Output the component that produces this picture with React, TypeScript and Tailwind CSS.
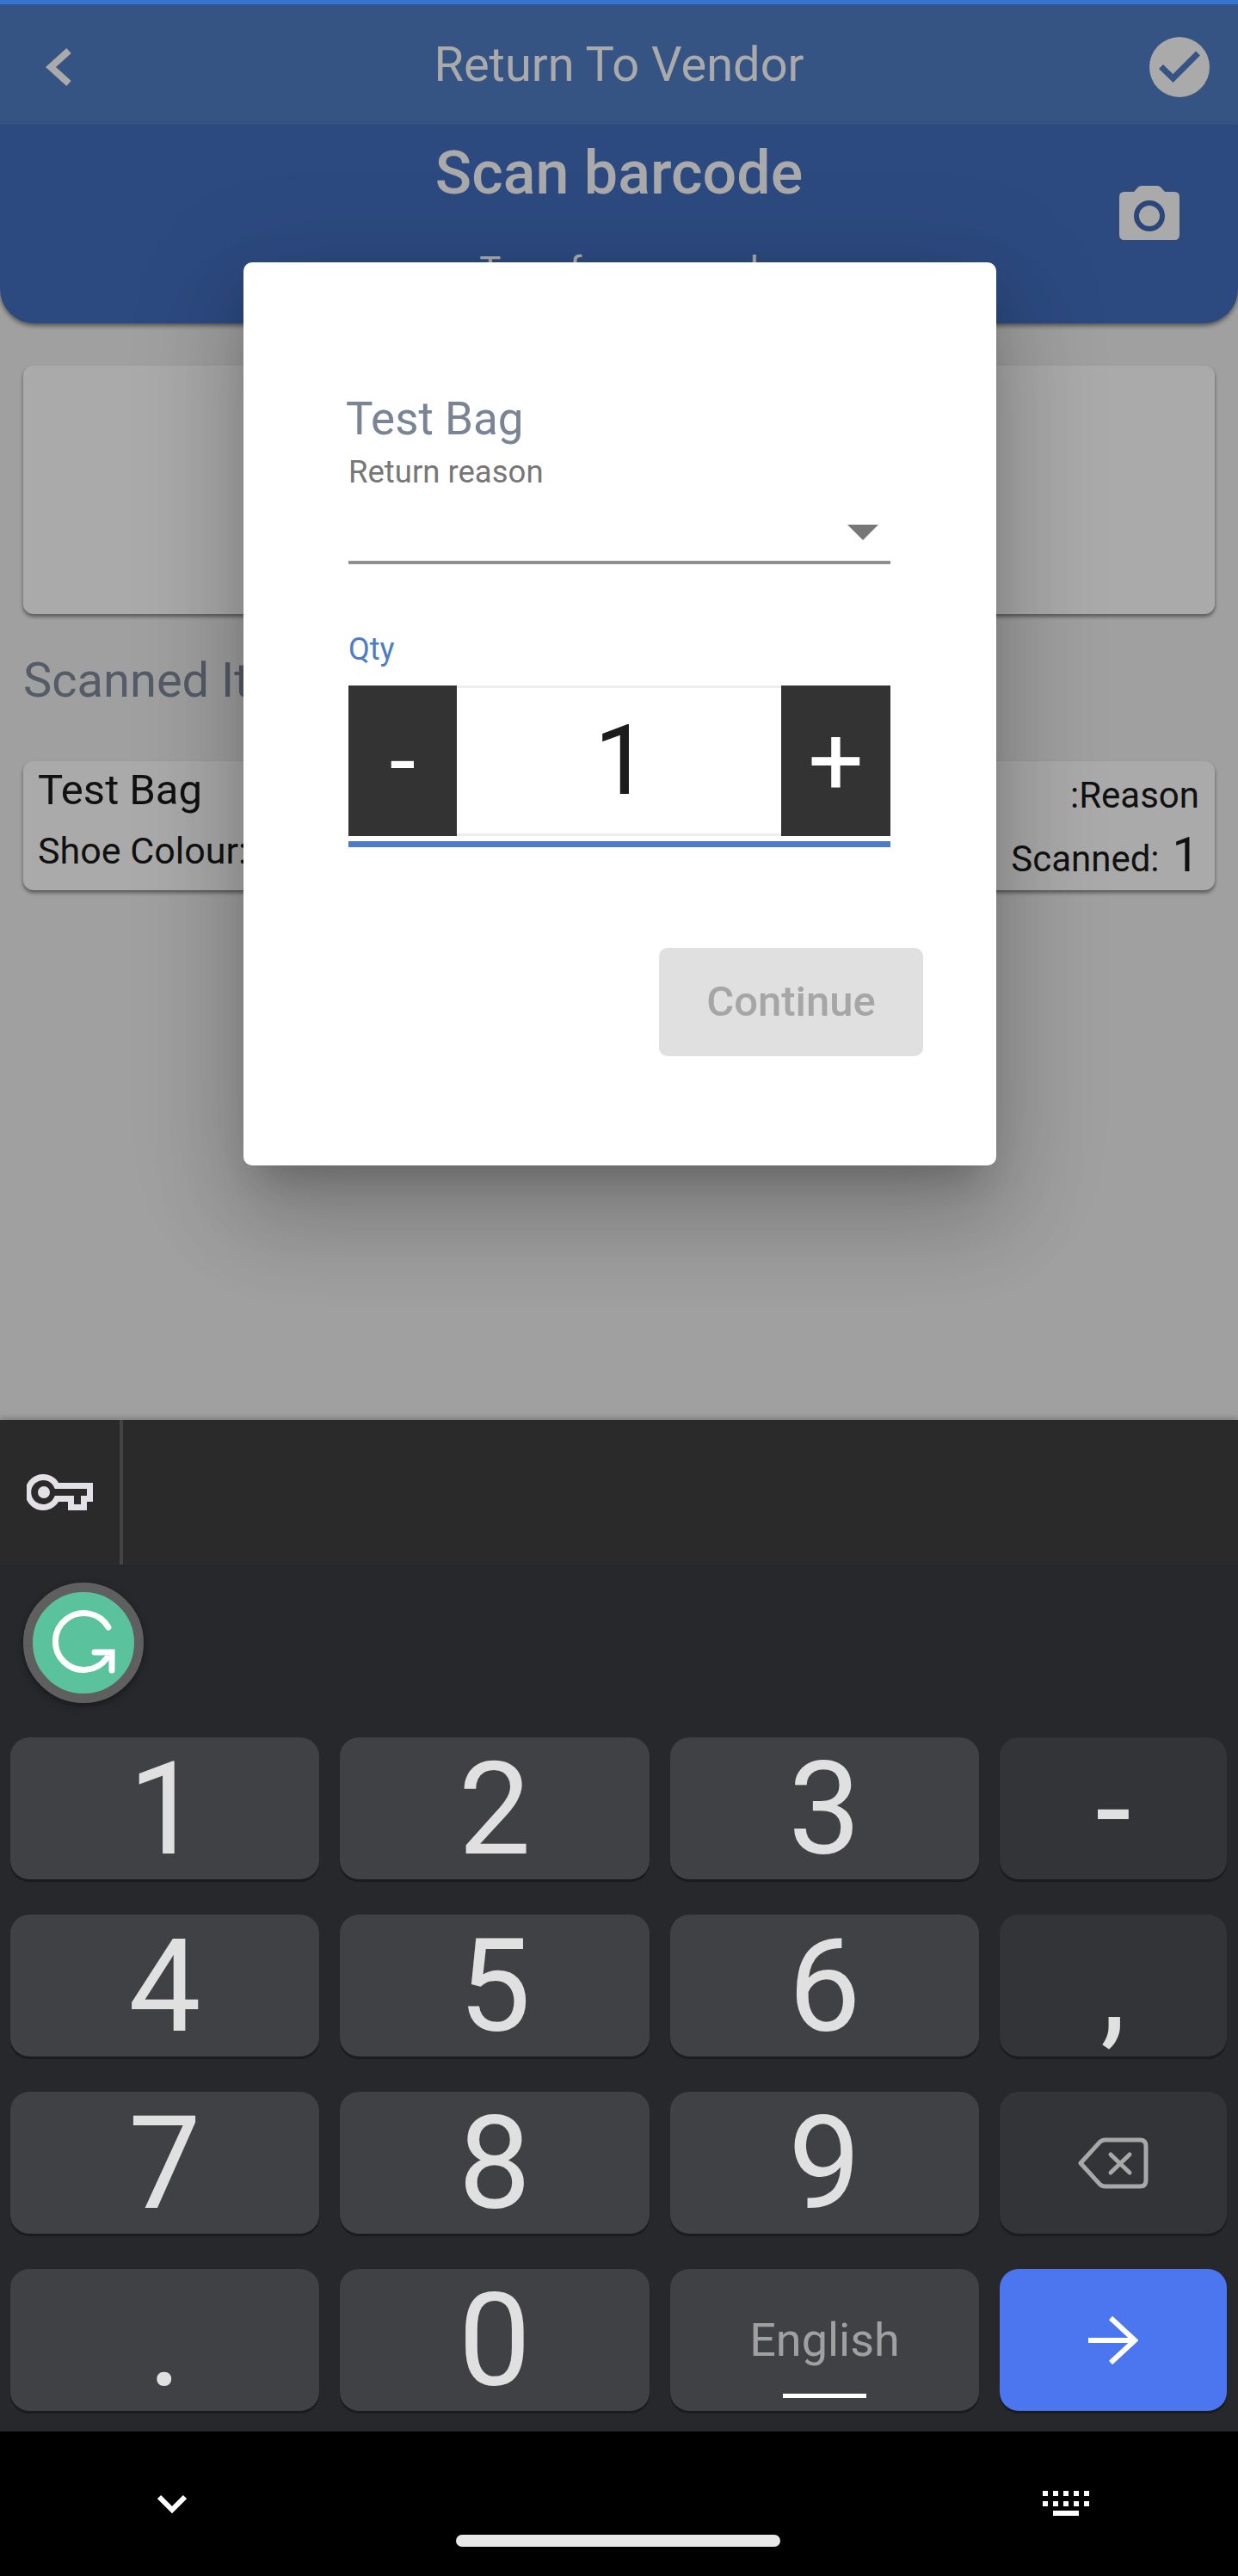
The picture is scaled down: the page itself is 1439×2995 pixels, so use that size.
import React from "react";

function Key({ label, fn }: { label: string; fn?: boolean }) {
  return (
    <div
      className={`h-[165px] pt-[2px] rounded-[22px] flex items-center justify-center text-[150px] leading-none text-[#e0e0e0] shadow-[0_3px_1px_#1b1b1e] ${
        fn ? "bg-[#333438]" : "bg-[#404145]"
      }`}
    >
      {label}
    </div>
  );
}

function CheckCircle() {
  return (
    <svg width="70" height="70" viewBox="0 0 70 70">
      <circle cx="35" cy="35" r="35" fill="#aaaaaa" />
      <path d="M13.5 34.5 L27.5 48 L56.5 19" fill="none" stroke="#365483" strokeWidth="7" />
    </svg>
  );
}

function Camera() {
  return (
    <svg width="70" height="63" viewBox="0 0 70 63">
      <path
        d="M6 7 H17 L22 1.5 Q23.5 0 26 0 H44 Q46.5 0 48 1.5 L53 7 H64 Q70 7 70 13 V57 Q70 63 64 63 H6 Q0 63 0 57 V13 Q0 7 6 7 Z"
        fill="#aaaaaa"
      />
      <circle cx="35" cy="35" r="15" fill="none" stroke="#2c4679" strokeWidth="6" />
    </svg>
  );
}

function KeyIcon() {
  return (
    <svg width="77" height="42" viewBox="0 0 77 42">
      <path
        d="M35 13.5 H73.5 V28.5 H66.5 V38.5 H51.5 V28.5 H35 A17.5 17.5 0 1 1 35 13.5 Z"
        fill="none"
        stroke="#e3e1e6"
        strokeWidth="7"
      />
      <circle cx="20" cy="21" r="7" fill="#e3e1e6" />
    </svg>
  );
}

function GrammarlyIcon() {
  return (
    <svg width="140" height="140" viewBox="0 0 140 140">
      <circle cx="70" cy="70" r="64.5" fill="#5bc29e" stroke="#5f5f5f" strokeWidth="11" />
      <path
        d="M99 52 A33 33 0 1 0 97 88"
        fill="none"
        stroke="#ffffff"
        strokeWidth="7"
        strokeLinecap="round"
      />
      <path
        d="M83 81 H103 V102"
        fill="none"
        stroke="#ffffff"
        strokeWidth="7"
        strokeLinecap="round"
      />
    </svg>
  );
}

function DeleteIcon() {
  return (
    <svg width="82" height="60" viewBox="0 0 82 60">
      <path
        d="M3 30 L24 7 Q27 3 32 3 H72 Q79 3 79 10 V50 Q79 57 72 57 H32 Q27 57 24 53 Z"
        fill="none"
        stroke="#a8a8a8"
        strokeWidth="5"
        strokeLinejoin="round"
      />
      <path
        d="M38 20 L60 41 M60 20 L38 41"
        fill="none"
        stroke="#a8a8a8"
        strokeWidth="5"
        strokeLinecap="round"
      />
    </svg>
  );
}

function ArrowIcon() {
  return (
    <svg width="58" height="56" viewBox="0 0 58 56">
      <path d="M0 28 H54 M26 2 L54 28 L26 54" fill="none" stroke="#ffffff" strokeWidth="6" />
    </svg>
  );
}

function KeyboardIcon() {
  const xs = [0, 12, 24, 36, 48];
  return (
    <svg width="54" height="30" viewBox="0 0 54 30">
      {xs.map((x) => (
        <rect key={`a${x}`} x={x} y="0" width="6" height="6" fill="#ffffff" />
      ))}
      {xs.map((x) => (
        <rect key={`b${x}`} x={x} y="12" width="6" height="6" fill="#ffffff" />
      ))}
      <rect x="12" y="23" width="30" height="6" fill="#ffffff" />
    </svg>
  );
}

export default function App() {
  return (
    <div className="w-[1439px] h-[2995px] flex flex-col overflow-hidden font-['Roboto',sans-serif]">
      <div className="relative h-[1651px] shrink-0 bg-[#a0a0a0] overflow-hidden">
        <div className="h-[5px] bg-[#3874ce]" />
        <div className="h-[140px] bg-[#365483] grid grid-cols-[1fr_auto_1fr] items-center pl-[53px] pr-[33px]">
          <svg width="30" height="44" viewBox="0 0 30 44" className="mt-[6px]">
            <path d="M27 3 L6 22 L27 41" fill="none" stroke="#aaaaaa" strokeWidth="8" />
          </svg>
          <div className="text-[56px] leading-[64px] text-[#aaaaaa] -translate-x-[10px]">Return To Vendor</div>
          <div className="flex justify-end mt-[6px]">
            <CheckCircle />
          </div>
        </div>
        <div className="h-[231px] bg-[#2d4a80] rounded-b-[40px] shadow-[0_3px_5px_rgba(0,0,0,0.45)] grid grid-cols-[1fr_auto_1fr]">
          <div />
          <div className="flex flex-col items-center pt-[16px]">
            <div className="text-[70px] leading-[80px] font-medium text-[#aaaaaa]">Scan barcode</div>
            <div className="mt-[48px] text-[42px] leading-[50px] text-[#aaaaaa]">Transfer scanned</div>
          </div>
          <div className="flex justify-end pt-[71px] pr-[68px]">
            <div>
              <Camera />
            </div>
          </div>
        </div>

        <div className="mx-[27px] mt-[49px] h-[289px] rounded-[12px] bg-[#aaaaaa] shadow-[0_3px_4px_rgba(0,0,0,0.45)]" />
        <div className="ml-[27px] mt-[44px] text-[56px] leading-[66px] text-[#555c68]">Scanned Items</div>
        <div className="mx-[27px] mt-[61px] h-[150px] rounded-[12px] bg-[#aaaaaa] shadow-[0_3px_4px_rgba(0,0,0,0.45)] flex justify-between pl-[17px] pr-[18px] text-[#111111]">
          <div className="pt-[6px]">
            <div className="text-[49px] leading-[56px]">Test Bag</div>
            <div className="mt-[17px] text-[43px] leading-[50px]">Shoe Colour:</div>
          </div>
          <div className="pt-[16px] flex flex-col items-end">
            <div className="text-[42px] leading-[48px]">:Reason</div>
            <div className="mt-[15px] flex items-baseline gap-[15px] text-[42px] leading-[60px]">
              <span>Scanned:</span>
              <span className="text-[56px]">1</span>
            </div>
          </div>
        </div>

        <div className="absolute left-[283px] top-[305px] w-[875px] h-[1050px] rounded-[10px] bg-white shadow-[0_29px_40px_-19px_rgba(0,0,0,0.2),0_64px_101px_8px_rgba(0,0,0,0.14),0_24px_123px_21px_rgba(0,0,0,0.12)] flex flex-col pl-[122px] pr-[85px] pt-[152px]">
          <div className="-ml-[3px] text-[53px] leading-[60px] text-[#7a8495]">Test Bag</div>
          <div className="mt-[12px] text-[36.5px] leading-[40px] text-[#777777]">Return reason</div>
          <div className="mr-[38px] h-[87px] border-b-[4px] border-[#8f8f8f] flex items-end justify-end pb-[24px] pr-[14px]">
            <svg width="36" height="18" viewBox="0 0 36 18">
              <path d="M0 0 H36 L18 18 Z" fill="#777777" />
            </svg>
          </div>
          <div className="mt-[79px] text-[36px] leading-[40px] text-[#4d7cc6]">Qty</div>
          <div className="mr-[38px] mt-[22px] pb-[6px] border-b-[7px] border-[#4d7cc6]">
            <div className="h-[175px] flex">
              <div className="w-[126px] bg-[#333333] flex items-center justify-center text-[110px] leading-none text-white">
                -
              </div>
              <div className="flex-1 border-y-[3px] border-[#eeeeee] flex items-center justify-center pl-[6px] text-[113px] leading-none text-[#1c1c1c]">
                1
              </div>
              <div className="w-[127px] bg-[#333333] flex items-center justify-center text-[114px] leading-none text-white">
                +
              </div>
            </div>
          </div>
          <div className="mt-[117px] self-end w-[307px] h-[126px] rounded-[10px] bg-[#e0e0e0] flex items-center justify-center text-[49px] font-medium text-[#a6a6a6]">
            Continue
          </div>
        </div>
      </div>

      <div className="relative h-[168px] shrink-0 bg-[#2a2a2a] shadow-[0_-3px_6px_rgba(0,0,0,0.2)] flex">
        <div className="w-[139px] border-r-0 flex items-start pt-[63px] pl-[31px]">
          <KeyIcon />
        </div>
        <div className="w-[4px] bg-[#444444]" />
      </div>

      <div className="h-[1008px] shrink-0 bg-[#27282c] flex flex-col">
        <div className="h-[201px] pt-[21px] pl-[27px]">
          <div className="w-[140px] h-[140px] rounded-full shadow-[0_3px_8px_rgba(0,0,0,0.4)]">
            <GrammarlyIcon />
          </div>
        </div>
        <div className="grid grid-cols-[359px_360px_359px_264px] gap-x-[24px] gap-y-[41px] pl-[12px]">
          <Key label="1" />
          <Key label="2" />
          <Key label="3" />
          <Key label="-" fn />
          <Key label="4" />
          <Key label="5" />
          <Key label="6" />
          <Key label="," fn />
          <Key label="7" />
          <Key label="8" />
          <Key label="9" />
          <div className="h-[165px] rounded-[22px] bg-[#333438] shadow-[0_3px_1px_#1b1b1e] flex items-center justify-center">
            <DeleteIcon />
          </div>
          <Key label="." />
          <Key label="0" />
          <div className="h-[165px] rounded-[22px] bg-[#404145] shadow-[0_3px_1px_#1b1b1e] flex flex-col items-center pt-[51px]">
            <div className="text-[54px] leading-[64px] text-[#a0a0a0]">English</div>
            <div className="mt-[30px] w-[97px] h-[5px] bg-white" />
          </div>
          <div className="h-[165px] rounded-[22px] bg-[#4c76f0] shadow-[0_3px_1px_#1b1b1e] flex items-center justify-center">
            <ArrowIcon />
          </div>
        </div>
      </div>

      <div className="flex-1 bg-black flex flex-col">
        <div className="flex justify-between pt-[69px] pl-[183px] pr-[173px]">
          <svg width="34" height="22" viewBox="0 0 34 22" className="mt-[4px]">
            <path d="M2 3 L17 18 L32 3" fill="none" stroke="#ffffff" strokeWidth="6" />
          </svg>
          <KeyboardIcon />
        </div>
        <div className="mt-[21px] ml-[530px] w-[377px] h-[14px] rounded-full bg-[#e8e8e8]" />
      </div>
    </div>
  );
}
